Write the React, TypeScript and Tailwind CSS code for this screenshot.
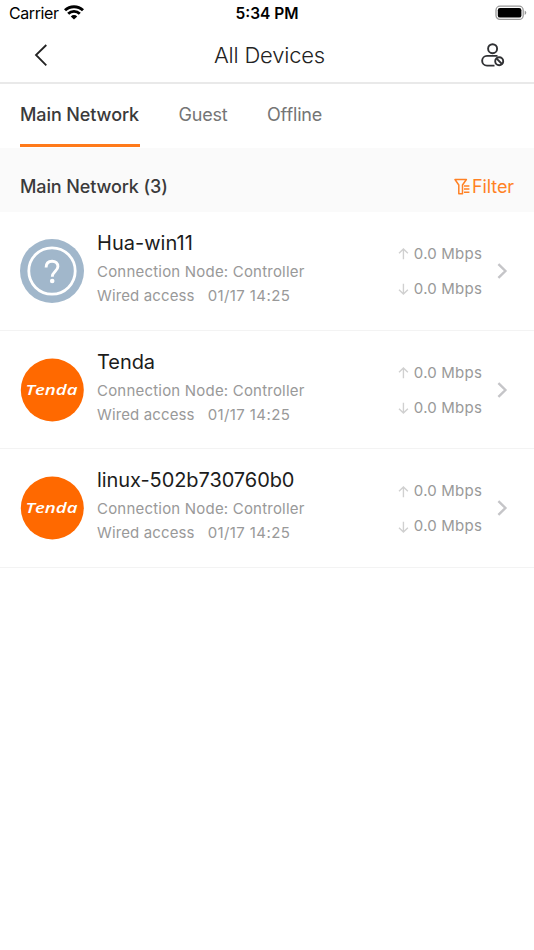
import React from "react";

interface Device {
  name: string;
  brand: "unknown" | "tenda";
  nameClass: string;
}

const devices: Device[] = [
  { name: "Hua-win11", brand: "unknown", nameClass: "tracking-[0.02px]" },
  { name: "Tenda", brand: "tenda", nameClass: "tracking-[-0.05px]" },
  { name: "linux-502b730760b0", brand: "tenda", nameClass: "tracking-[-0.07px]" },
];

function StatusBar() {
  return (
    <div className="grid h-7 grid-cols-3 items-center pr-[7px] pl-[9px] text-black">
      <div className="flex items-center gap-[5px]">
        <span className="-mt-[2px] text-[16px] leading-7 tracking-[-0.4px]">Carrier</span>
        <svg className="-mt-[3px]" width="20" height="15" viewBox="0 0 20 15" fill="none" stroke="#000" strokeWidth="2.9">
          <path d="M1 5.3a13 13 0 0 1 18 0" />
          <path d="M4.2 8.7a8.4 8.4 0 0 1 11.6 0" />
          <path d="M10 14.6 6.8 11.4a4.6 4.6 0 0 1 6.4 0z" fill="#000" stroke="none" />
        </svg>
      </div>
      <div className="-ml-[2px] text-center text-[15.5px] leading-7 font-semibold tracking-[0px] whitespace-nowrap">
        5:34 PM
      </div>
      <svg className="-mt-[2px] justify-self-end" width="32" height="16" viewBox="0 0 32 16">
        <rect x="1" y="1.2" width="27.2" height="13.2" rx="4" fill="none" stroke="#999" strokeWidth="1.3" />
        <rect x="2.8" y="3" width="23.6" height="9.6" rx="2.2" fill="#000" />
        <path d="M29.7 5.5q1.6.8 1.6 2.3t-1.6 2.3z" fill="#999" />
      </svg>
    </div>
  );
}

function Header() {
  return (
    <header className="grid h-14 grid-cols-[1fr_auto_1fr] items-center border-b-2 border-[#e9e9e9] pr-7 pl-[33px]">
      <svg className="-mt-px" width="16" height="24" viewBox="0 0 16 24" fill="none" stroke="#222" strokeWidth="1.8">
        <path d="M13.3 2 3 12l10.3 10.3" />
      </svg>
      <h1 className="text-[22px] leading-8 font-light tracking-[-0.2px] text-[#222]">All Devices</h1>
      <svg className="-mt-px justify-self-end" width="26" height="26" viewBox="0 0 26 26" fill="none" stroke="#303134" strokeWidth="1.9">
        <circle cx="12.6" cy="6.7" r="4.5" />
        <path d="M14.5 23.6H7a4.8 4.8 0 0 1 0-9.7h10.5" />
        <circle cx="19.2" cy="19.2" r="4" />
        <path d="m16.4 16.4 5.6 5.6" />
      </svg>
    </header>
  );
}

function Tabs() {
  return (
    <nav className="flex h-16 gap-[39px] px-5 text-[18px] leading-[60px] text-[#757575]">
      <button className="h-[63px] w-[119.5px] border-b-[3px] border-[#ff7a1a] pt-px text-left font-medium tracking-[-0.1px] whitespace-nowrap text-[#3a3a3a]">
        Main Network
      </button>
      <button className="h-[61px] w-[49.5px] text-left tracking-[-0.2px] whitespace-nowrap">Guest</button>
      <button className="h-[61px] text-left tracking-[-0.15px] whitespace-nowrap">Offline</button>
    </nav>
  );
}

function SectionBar() {
  return (
    <div className="flex h-16 items-center justify-between bg-[#fafafa] px-5 pt-3.5">
      <h2 className="text-[18px] leading-7 font-medium tracking-[-0.12px] text-[#3a3a3a]">Main Network (3)</h2>
      <button className="flex items-center gap-[2px] text-[18px] leading-7 tracking-[-0.1px] text-[#ff8124]">
        <svg className="-mt-px" width="16" height="18" viewBox="0 0 16 18" fill="none" stroke="currentColor" strokeWidth="1.5">
          <path d="M1 1.5h11.4L8.5 7v8.8H4.8V7z" strokeLinejoin="round" />
          <path d="M10 8h5.4M10 11.1h5.4M10 14.2h5.4" />
        </svg>
        <span>Filter</span>
      </button>
    </div>
  );
}

function DeviceIcon({ brand }: { brand: Device["brand"] }) {
  if (brand === "unknown") {
    return (
      <svg width="64" height="64" viewBox="0 0 64 64" fill="none">
        <circle cx="32" cy="32" r="32" fill="#a1b7cb" />
        <circle cx="32" cy="32" r="23.2" stroke="#fff" strokeWidth="2.8" />
        <path d="M26.1 28.6c0-4 2.3-6.4 6-6.4 3.5 0 5.8 2.1 5.8 5.3 0 4.6-5.6 4.9-5.6 10.3" stroke="#fff" strokeWidth="2.9" />
        <circle cx="32.2" cy="42" r="2.3" fill="#fff" />
      </svg>
    );
  }
  return (
    <svg width="64" height="64" viewBox="0 0 64 64">
      <circle cx="32.3" cy="32" r="31.5" fill="#ff6900" />
      <text
        x="5.5"
        y="37"
        textLength="52"
        lengthAdjust="spacingAndGlyphs"
        fill="#fff"
        fontFamily="Open Sans, sans-serif"
        fontSize="13.5"
        fontWeight="600"
        fontStyle="italic"
      >
        Tenda
      </text>
    </svg>
  );
}

function Rate({ up }: { up: boolean }) {
  return (
    <div className="flex h-[35px] items-center gap-[5px]">
      <svg width="11" height="12" viewBox="0 0 11 12" fill="none" stroke="#d0d0d0" strokeWidth="1.4">
        <path d={up ? "M5.5 11.3V1M1 5.2 5.5.9 10 5.2" : "M5.5.7V11M1 6.8l4.5 4.3L10 6.8"} />
      </svg>
      <span className="text-[15px] tracking-[0.2px] whitespace-nowrap text-[#999]">0.0 Mbps</span>
    </div>
  );
}

function DeviceRow({ device }: { device: Device }) {
  return (
    <li className="flex h-[118.7px] items-center border-b border-[#f3f3f3] pr-[26px] pl-5">
      <DeviceIcon brand={device.brand} />
      <div className="ml-[13px] flex-1 pb-[8px]">
        <div className={`text-[20px] leading-[34px] text-[#1c1c1c] ${device.nameClass}`}>{device.name}</div>
        <div className="text-[15px] leading-6 tracking-[0.2px] text-[#999]">Connection Node: Controller</div>
        <div className="flex gap-[13px] text-[15px] leading-6 text-[#999]">
          <span className="tracking-[0.13px]">Wired access</span>
          <span className="tracking-[0.4px]">01/17 14:25</span>
        </div>
      </div>
      <div className="mr-[15px] w-[84px] pt-[2px]">
        <Rate up />
        <Rate up={false} />
      </div>
      <svg width="11" height="16" viewBox="0 0 11 16" fill="none" stroke="#c5c5c8" strokeWidth="2.4">
        <path d="m1.4 1.2 7 6.8-7 6.8" />
      </svg>
    </li>
  );
}

export default function App() {
  return (
    <main className="h-[950px] w-[534px] overflow-hidden bg-white font-['Inter','Liberation_Sans',sans-serif]">
      <StatusBar />
      <Header />
      <Tabs />
      <SectionBar />
      <ul>
        {devices.map((device) => (
          <DeviceRow key={device.name} device={device} />
        ))}
      </ul>
    </main>
  );
}
